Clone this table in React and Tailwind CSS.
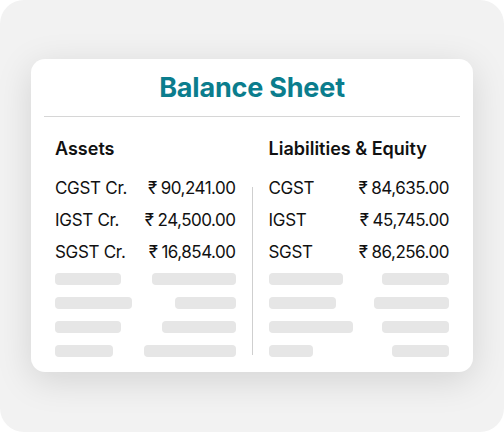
import React from "react";

const assets = [
  { label: "CGST Cr.", value: "90,241.00" },
  { label: "IGST Cr.", value: "24,500.00" },
  { label: "SGST Cr.", value: "16,854.00" },
];

const liabilities = [
  { label: "CGST", value: "84,635.00" },
  { label: "IGST", value: "45,745.00" },
  { label: "SGST", value: "86,256.00" },
];

// skeleton widths [left, right] per row
const assetBars = [
  ["w-[66px]", "w-[84px]"],
  ["w-[77px]", "w-[61px]"],
  ["w-[66px]", "w-[74px]"],
  ["w-[58px]", "w-[92px]"],
];

const liabilityBars = [
  ["w-[74px]", "w-[67px]"],
  ["w-[67px]", "w-[75px]"],
  ["w-[84px]", "w-[67px]"],
  ["w-[44px]", "w-[57px]"],
];

function Column({ rows, bars }) {
  return (
    <div className="flex flex-col">
      {rows.map((r) => (
        <div key={r.label} className="flex justify-between h-[32px] leading-[32px] text-[17px] text-[#111] tracking-[-0.3px]">
          <span>{r.label}</span>
          <span className="tracking-[-0.5px]">
            ₹<span className="ml-[4px]">{r.value}</span>
          </span>
        </div>
      ))}
      <div className="flex flex-col gap-3 mt-[5px]">
        {bars.map((b, i) => (
          <div key={i} className="flex justify-between">
            <div className={`h-3 rounded-[4px] bg-[#e6e6e6] ${b[0]}`}></div>
            <div className={`h-3 rounded-[4px] bg-[#e6e6e6] ${b[1]}`}></div>
          </div>
        ))}
      </div>
    </div>
  );
}

export default function App() {
  return (
    <div className="w-[504px] h-[432px] bg-white" style={{ fontFamily: "Inter, 'Noto Sans', sans-serif" }}>
      <div className="w-full h-full rounded-[24px] bg-[#f2f2f2] flex items-center justify-center">
        <div className="w-[442px] bg-white rounded-[14px] shadow-[0_8px_36px_rgba(0,0,0,0.13)] pt-[13px] pb-[15px] mb-[1px]">
          <h1 className="text-center text-[27px] leading-[32px] font-bold text-[#0b7d8d] tracking-[-0.2px]">
            Balance Sheet
          </h1>
          <div className="mx-[13px] mt-3 h-px bg-[#d6d6d6]"></div>

          <div className="px-6 mt-5 grid grid-cols-[1fr_1px_1fr] gap-x-4">
            <div className="text-[18px] leading-[24px] font-semibold text-[#111]">Assets</div>
            <div></div>
            <div className="text-[18px] leading-[24px] font-semibold text-[#111]">Liabilities &amp; Equity</div>
          </div>

          <div className="px-6 mt-[11px] grid grid-cols-[1fr_1px_1fr] gap-x-4">
            <Column rows={assets} bars={assetBars} />
            <div className="bg-[#cfcfcf] mt-[15px] mb-[2px]"></div>
            <Column rows={liabilities} bars={liabilityBars} />
          </div>
        </div>
      </div>
    </div>
  );
}
